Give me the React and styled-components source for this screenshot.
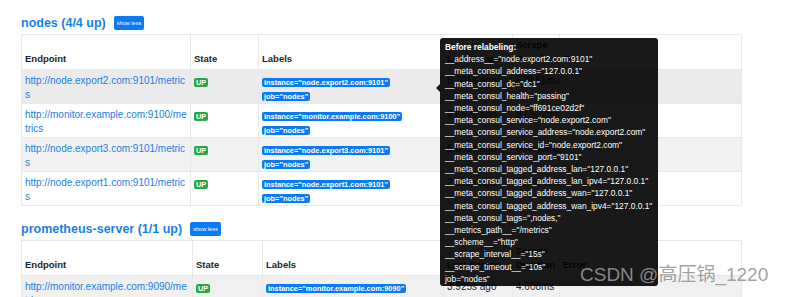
import React from "react";
import styled, { createGlobalStyle } from "styled-components";

const GlobalStyle = createGlobalStyle`
  html, body {
    margin: 0;
    padding: 0;
    background: #fff;
    font-family: "Liberation Sans", Arial, sans-serif;
    color: #212529;
  }
`;

const pools = [
  {
    name: "nodes (4/4 up)",
    cols: [169, 68, 185, 69, 47, 182],
    rows: [
      {
        endpoint: "http://node.export2.com:9101/metrics",
        instance: "node.export2.com:9101",
        job: "nodes",
        last: "5.701s ago",
        duration: "679.61ms",
        bg: "#ebebeb",
      },
      {
        endpoint: "http://monitor.example.com:9100/metrics",
        instance: "monitor.example.com:9100",
        job: "nodes",
        last: "9.652s ago",
        duration: "82.527ms",
      },
      {
        endpoint: "http://node.export3.com:9101/metrics",
        instance: "node.export3.com:9101",
        job: "nodes",
        last: "6.065s ago",
        duration: "606.43ms",
        bg: "#f2f2f2",
      },
      {
        endpoint: "http://node.export1.com:9101/metrics",
        instance: "node.export1.com:9101",
        job: "nodes",
        last: "2.118s ago",
        duration: "31.904ms",
      },
    ],
  },
  {
    name: "prometheus-server (1/1 up)",
    cols: [171, 70, 181, 69, 47, 182],
    rows: [
      {
        endpoint: "http://monitor.example.com:9090/metrics",
        instance: "monitor.example.com:9090",
        job: "prometheus",
        last: "3.925s ago",
        duration: "4.608ms",
        bg: "#f0f0f0",
      },
    ],
  },
];

const relabel = [
  '__address__="node.export2.com:9101"',
  '__meta_consul_address="127.0.0.1"',
  '__meta_consul_dc="dc1"',
  '__meta_consul_health="passing"',
  '__meta_consul_node="ff691ce02d2f"',
  '__meta_consul_service="node.export2.com"',
  '__meta_consul_service_address="node.export2.com"',
  '__meta_consul_service_id="node.export2.com"',
  '__meta_consul_service_port="9101"',
  '__meta_consul_tagged_address_lan="127.0.0.1"',
  '__meta_consul_tagged_address_lan_ipv4="127.0.0.1"',
  '__meta_consul_tagged_address_wan="127.0.0.1"',
  '__meta_consul_tagged_address_wan_ipv4="127.0.0.1"',
  '__meta_consul_tags=",nodes,"',
  '__metrics_path__="/metrics"',
  '__scheme__="http"',
  '__scrape_interval__="15s"',
  '__scrape_timeout__="10s"',
  'job="nodes"',
];

export default function App() {
  return (
    <Page>
      <GlobalStyle />
      {pools.map((pool) => (
        <Section key={pool.name}>
          <Heading>
            <Title>{pool.name}</Title>
            <ToggleButton>show less</ToggleButton>
          </Heading>
          <Table>
            <colgroup>
              {pool.cols.map((w, i) => (
                <col key={i} style={{ width: w }} />
              ))}
            </colgroup>
            <thead>
              <tr>
                <Th>Endpoint</Th>
                <Th>State</Th>
                <Th>Labels</Th>
                <Th>Last Scrape</Th>
                <Th>Scrape Duration</Th>
                <Th>Error</Th>
              </tr>
            </thead>
            <tbody>
              {pool.rows.map((row) => (
                <Row key={row.endpoint} $bg={row.bg}>
                  <Td>
                    <Link>{row.endpoint}</Link>
                  </Td>
                  <Td>
                    <Badge $color="#28a745">UP</Badge>
                  </Td>
                  <Td>
                    <Badge>instance="{row.instance}"</Badge>
                    <br />
                    <Badge>job="{row.job}"</Badge>
                  </Td>
                  <Td>{row.last}</Td>
                  <Td>{row.duration}</Td>
                  <Td></Td>
                </Row>
              ))}
            </tbody>
          </Table>
        </Section>
      ))}

      <Tooltip>
        <TipTitle>Before relabeling:</TipTitle>
        {relabel.map((line) => (
          <TipLine key={line}>{line}</TipLine>
        ))}
      </Tooltip>

      <Watermark>CSDN @高压锅_1220</Watermark>
    </Page>
  );
}

const Page = styled.div`
  position: relative;
  width: 785px;
  height: 297px;
  overflow: hidden;
  padding: 0 44px 0 21px;
  box-sizing: border-box;
`;

const Section = styled.section`
  padding-top: 15px;
`;

const Heading = styled.div`
  display: flex;
  align-items: center;
  gap: 8px;
  height: 16px;
  margin-bottom: 3px;
`;

const Title = styled.h2`
  margin: 0;
  font-size: 12.5px;
  font-weight: bold;
  color: #1a7fe8;
  line-height: 16px;
`;

const ToggleButton = styled.button`
  border: none;
  background: #0a7bf5;
  color: #fff;
  font-family: "Liberation Sans", Arial, sans-serif;
  font-size: 5.6px;
  height: 14px;
  padding: 0 3px;
  border-radius: 2px;
  line-height: 14px;
`;

const Table = styled.table`
  width: 720px;
  table-layout: fixed;
  border-collapse: collapse;
  font-size: 10px;
  line-height: 14px;
`;

const Th = styled.th`
  text-align: left;
  vertical-align: bottom;
  font-weight: bold;
  font-size: 9.5px;
  color: #212529;
  padding: 3px 3px 3px;
  border: 1px solid #e6e8ea;
`;

const Row = styled.tr`
  background: ${(p) => p.$bg || "#fff"};
`;

const Td = styled.td`
  vertical-align: top;
  padding: 4px 3px 1px 3px;
  border: 1px solid #e6e8ea;
  color: #212529;
`;

const Link = styled.a`
  color: #1a7fe8;
  word-break: break-all;
`;

const Badge = styled.span`
  display: inline-block;
  background: ${(p) => p.$color || "#0a7bf5"};
  color: #fff;
  font-size: 7.4px;
  font-weight: bold;
  line-height: 9px;
  padding: 0 2px;
  border-radius: 2px;
  white-space: nowrap;
  vertical-align: -1px;
`;

const Tooltip = styled.div`
  position: absolute;
  left: 440px;
  top: 38px;
  width: 218px;
  height: 248px;
  box-sizing: border-box;
  padding: 3px 5px;
  background: rgba(0, 0, 0, 0.9);
  border-radius: 3px;
  color: #fff;
  font-size: 8.4px;
  line-height: 12.2px;

  &::before {
    content: "";
    position: absolute;
    left: -4px;
    top: 46px;
    border-style: solid;
    border-width: 4px 4px 4px 0;
    border-color: transparent rgba(0, 0, 0, 0.9) transparent transparent;
  }
`;

const TipTitle = styled.div`
  font-weight: bold;
`;

const TipLine = styled.div`
  white-space: nowrap;
`;

const Watermark = styled.div`
  position: absolute;
  left: 580px;
  top: 263px;
  font-family: "Liberation Sans", "Noto Sans CJK SC", sans-serif;
  font-size: 19px;
  line-height: 24px;
  color: rgba(150, 150, 150, 0.9);
  white-space: nowrap;
`;
